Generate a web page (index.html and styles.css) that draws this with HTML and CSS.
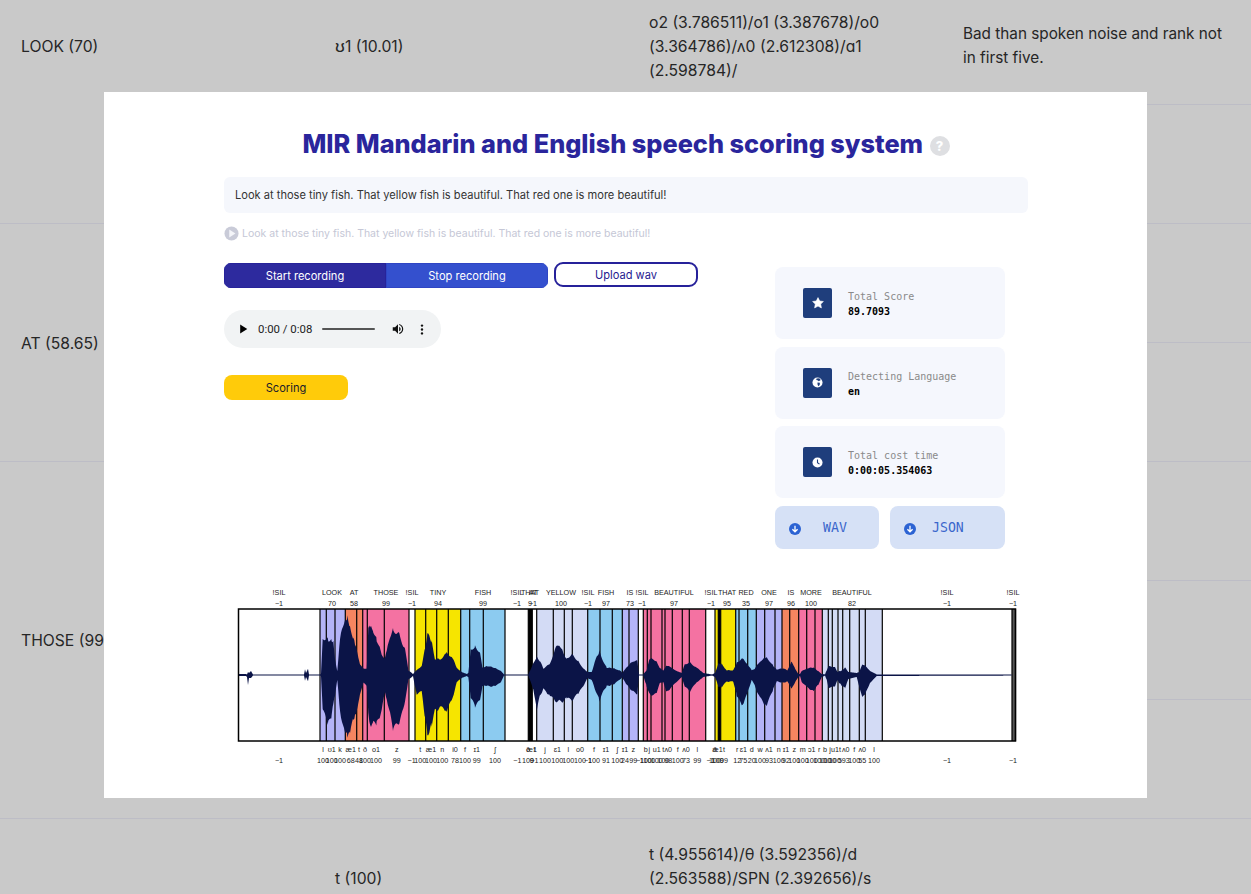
FILE: index.html
```html
<!DOCTYPE html>
<html lang="en">
<head>
    <meta charset="UTF-8">
    <meta name="viewport" content="width=device-width, initial-scale=1.0">
    <title>MIR speech scoring</title>
    <link rel="stylesheet" href="styles.css">
</head>
<body>
    <table class="result-table">
        <colgroup>
            <col class="col-wide"><col class="col-wide"><col class="col-wide"><col class="col-last">
        </colgroup>
        <tr>
            <td rowspan="2" class="word-top">LOOK (70)</td>
            <td>ʊ1 (10.01)</td>
            <td>o2 (3.786511)/o1 (3.387678)/o0 (3.364786)/ʌ0 (2.612308)/ɑ1 (2.598784)/</td>
            <td class="note-cell">Bad than spoken noise and rank not in first five.</td>
        </tr>
        <tr><td></td><td></td><td></td></tr>
        <tr>
            <td rowspan="2">AT (58.65)</td>
            <td></td><td></td><td></td>
        </tr>
        <tr><td></td><td></td><td></td></tr>
        <tr>
            <td rowspan="3">THOSE (99.85)</td>
            <td></td><td></td><td></td>
        </tr>
        <tr><td></td><td></td><td></td></tr>
        <tr><td></td><td></td><td></td></tr>
        <tr>
            <td></td>
            <td>t (100)</td>
            <td>t (4.955614)/θ (3.592356)/d (2.563588)/SPN (2.392656)/s (2.291144)/</td>
            <td></td>
        </tr>
    </table>

    <div class="modal">
        <h1 class="modal-title">
            MIR Mandarin and English speech scoring system
            <span class="help-icon">?</span>
        </h1>

        <div class="sentence-box">Look at those tiny fish. That yellow fish is beautiful. That red one is more beautiful!</div>

        <div class="hint-row">
            <svg class="hint-play" viewBox="0 0 16 16" width="16" height="16">
                <circle cx="8" cy="8" r="7.5" fill="#c9cbd8"/>
                <path d="M5.6 3.8 L12.2 8 L5.6 12.2 Z" fill="#f4f5f9"/>
            </svg>
            <span>Look at those tiny fish. That yellow fish is beautiful. That red one is more beautiful!</span>
        </div>

        <div class="main-grid">
            <div class="left-col">
                <div class="button-row">
                    <div class="record-group">
                        <button class="btn-start">Start recording</button>
                        <button class="btn-stop">Stop recording</button>
                    </div>
                    <button class="btn-upload">Upload wav</button>
                </div>

                <div class="player">
                    <svg viewBox="0 0 10 12" width="9" height="10"><path d="M1 0.5 L9.5 6 L1 11.5 Z" fill="#000"/></svg>
                    <span class="player-time">0:00 / 0:08</span>
                    <span class="player-track"></span>
                    <svg class="player-volume" viewBox="0 0 24 24" width="14" height="14"><path d="M3 9v6h4l5 5V4L7 9H3zm13.5 3c0-1.77-1.02-3.29-2.5-4.03v8.05c1.48-.73 2.5-2.25 2.5-4.02zM14 3.23v2.06c2.89.86 5 3.54 5 6.71s-2.11 5.85-5 6.71v2.06c4.01-.91 7-4.49 7-8.77s-2.99-7.86-7-8.77z" fill="#111"/></svg>
                    <svg class="player-more" viewBox="0 0 4 14" width="4" height="11">
                        <circle cx="2" cy="2" r="1.5" fill="#111"/>
                        <circle cx="2" cy="7" r="1.5" fill="#111"/>
                        <circle cx="2" cy="12" r="1.5" fill="#111"/>
                    </svg>
                </div>

                <button class="btn-scoring">Scoring</button>
            </div>

            <div class="right-col">
                <div class="stat-card">
                    <div class="stat-icon">
                        <svg viewBox="0 0 12 12" width="12" height="12"><path d="M6 .6 L7.7 4 L11.4 4.5 L8.7 7.1 L9.4 10.9 L6 9.1 L2.6 10.9 L3.3 7.1 L.6 4.5 L4.3 4 Z" fill="#fff" stroke="#fff" stroke-width=".6" stroke-linejoin="round"/></svg>
                    </div>
                    <div class="stat-text">
                        <div class="stat-label">Total Score</div>
                        <div class="stat-value">89.7093</div>
                    </div>
                </div>
                <div class="stat-card">
                    <div class="stat-icon">
                        <svg viewBox="0 0 12 12" width="11" height="11">
                            <circle cx="6" cy="6" r="5.5" fill="#fff"/>
                            <path d="M5 1.6 L8 1.4 L9.6 3.4 L7.4 4.6 L6 3.6 L4.6 3.4 Z M6 6 L8.6 6.2 L8.4 8.6 L6.8 10 L6 8 Z" fill="#1f3e7c"/>
                        </svg>
                    </div>
                    <div class="stat-text">
                        <div class="stat-label">Detecting Language</div>
                        <div class="stat-value">en</div>
                    </div>
                </div>
                <div class="stat-card">
                    <div class="stat-icon">
                        <svg viewBox="0 0 12 12" width="11" height="11">
                            <circle cx="6" cy="6" r="5.5" fill="#fff"/>
                            <path d="M6 2.8 V6.2 L8.2 7.8" fill="none" stroke="#1f3e7c" stroke-width="1.2"/>
                        </svg>
                    </div>
                    <div class="stat-text">
                        <div class="stat-label">Total cost time</div>
                        <div class="stat-value">0:00:05.354063</div>
                    </div>
                </div>
                <div class="download-row">
                    <button class="btn-download btn-wav">
                        <svg viewBox="0 0 12 12" width="12" height="12">
                            <circle cx="6" cy="6" r="6" fill="#2c63d3"/>
                            <path d="M6 2.8 V8.6 M3.4 6.2 L6 8.8 L8.6 6.2" fill="none" stroke="#fff" stroke-width="1.3"/>
                        </svg>
                        <span>WAV</span>
                    </button>
                    <button class="btn-download btn-json">
                        <svg viewBox="0 0 12 12" width="12" height="12">
                            <circle cx="6" cy="6" r="6" fill="#2c63d3"/>
                            <path d="M6 2.8 V8.6 M3.4 6.2 L6 8.8 L8.6 6.2" fill="none" stroke="#fff" stroke-width="1.3"/>
                        </svg>
                        <span>JSON</span>
                    </button>
                </div>
            </div>
        </div>

        <svg id="alignmentChart" class="alignment-chart" viewBox="224 580 804 195" width="804" height="195"></svg>
    </div>

    <script src="chart.js"></script>
</body>
</html>
```

FILE: styles.css
```css
html, body {
    height: 100%;
    overflow: hidden;
}
body {
    font-family: Inter, Arial, sans-serif;
    background-color: #c9c9c9;
    color: #262626;
    margin: 0;
}
.result-table {
    width: 1251px;
    margin-top: -14px;
    border-collapse: collapse;
    table-layout: fixed;
    font-size: 15.7px;
    line-height: 24px;
}
.col-wide {
    width: 314px;
}
.col-last {
    width: 309px;
}
.result-table td {
    height: 118.9px;
    box-sizing: border-box;
    padding: 3px 24px 0 21px;
    border-bottom: 1px solid #bdbdc6;
}
.result-table td.word-top {
    vertical-align: top;
    padding-top: 49px;
}
.result-table td.note-cell {
    padding-top: 2px;
    padding-right: 20px;
    font-size: 15.3px;
}
.modal {
    position: absolute;
    left: 104px;
    top: 92px;
    width: 1043px;
    height: 706px;
    box-sizing: border-box;
    padding: 36px 119px 0 120px;
    background-color: #fff;
}
.modal-title {
    margin: 0 0 17px;
    font-size: 25.3px;
    line-height: 32px;
    font-weight: 800;
    color: #2a259c;
    text-align: center;
}
.help-icon {
    display: inline-block;
    width: 20px;
    height: 20px;
    border-radius: 50%;
    background-color: #dedfe2;
    color: #fff;
    font-size: 13px;
    line-height: 20px;
    vertical-align: 2px;
    margin-left: 1px;
}
.sentence-box {
    height: 36px;
    padding-left: 11px;
    border-radius: 6px;
    background-color: #f5f7fc;
    color: #333;
    font-size: 11.1px;
    line-height: 36px;
}
.hint-row {
    display: flex;
    align-items: center;
    gap: 3px;
    height: 16px;
    margin-top: 12px;
    color: #c5c7d6;
    font-size: 10.5px;
}
.hint-play {
    width: 15px;
    height: 15px;
}
.main-grid {
    display: grid;
    grid-template-columns: 551px 230px;
    margin-top: 21px;
}
.button-row {
    display: flex;
    gap: 6px;
}
.record-group {
    display: flex;
    width: 324px;
    height: 25px;
    margin-top: 1px;
    border-radius: 7px;
    overflow: hidden;
}
button {
    font-family: Inter, Arial, sans-serif;
    font-size: 11.1px;
    padding: 0;
    border: none;
}
.btn-start, .btn-stop {
    width: 50%;
    color: #fff;
}
.btn-start {
    background-color: #2d2a9e;
    box-shadow: inset 0 0 0 1px #27239a;
}
.btn-stop {
    background-color: #3450ce;
    box-shadow: inset 0 0 0 1px #2f45c4;
}
.btn-upload {
    width: 144px;
    height: 25px;
    background-color: #fff;
    border: 2px solid #26219a;
    border-radius: 9px;
    color: #1f1a90;
}
.player {
    display: flex;
    align-items: center;
    width: 217px;
    height: 38px;
    box-sizing: border-box;
    margin-top: 22px;
    padding-left: 15px;
    border-radius: 19px;
    background-color: #f1f3f4;
}
.player-time {
    margin-left: 10px;
    font-family: Roboto, Arial, sans-serif;
    font-size: 11.4px;
    color: #222;
    white-space: nowrap;
}
.player-track {
    width: 53px;
    height: 2px;
    margin-left: 10px;
    border-radius: 1px;
    background-color: #555;
}
.player-volume {
    margin-left: 16px;
}
.player-more {
    margin-left: 15px;
}
.btn-scoring {
    display: block;
    width: 124px;
    height: 25px;
    margin-top: 27px;
    border-radius: 8px;
    background-color: #ffcb0a;
    color: #1a1a2a;
}
.right-col {
    display: flex;
    flex-direction: column;
    gap: 7.5px;
    padding-top: 5px;
}
.stat-card {
    display: flex;
    align-items: center;
    gap: 16px;
    height: 72px;
    padding-left: 28px;
    border-radius: 8px;
    background-color: #f5f7fd;
    font-family: "DejaVu Sans Mono", "Liberation Mono", monospace;
    font-size: 10px;
    line-height: 15px;
}
.stat-text {
    padding-top: 2px;
}
.stat-icon {
    display: flex;
    align-items: center;
    justify-content: center;
    width: 29px;
    height: 30px;
    border-radius: 2px;
    background-color: #1f3e7c;
}
.stat-label {
    color: #8a8a8a;
}
.stat-value {
    color: #000;
    font-weight: 700;
}
.download-row {
    display: flex;
    gap: 11px;
}
.btn-download {
    display: flex;
    align-items: center;
    height: 43px;
    padding-left: 14px;
    border-radius: 8px;
    background-color: #d6e1f6;
    color: #3a66cc;
    font-family: "DejaVu Sans Mono", "Liberation Mono", monospace;
    font-size: 13.2px;
}
.btn-download svg {
    margin-top: 3px;
}
.btn-wav {
    width: 104px;
}
.btn-wav span {
    margin-left: 22px;
}
.btn-json {
    width: 115px;
}
.btn-json span {
    margin-left: 16px;
}
.alignment-chart {
    display: block;
    margin-top: 31px;
}
.chart-label {
    font-family: "Liberation Sans", Arial, sans-serif;
    font-size: 7.2px;
    fill: #222;
    text-anchor: middle;
}
.seg-lav { fill: #b4b4f8; }
.seg-org { fill: #f58560; }
.seg-pnk { fill: #f472a2; }
.seg-yel { fill: #f6e500; }
.seg-blu { fill: #8ccbf0; }
.seg-per { fill: #d3dbf5; }
.seg-wht { fill: #fff; }
.seg-blk { fill: #000; }
.seg-gry { fill: #555; }
.seg-line {
    stroke: #000;
    stroke-width: 1.2;
}
.chart-frame {
    fill: none;
    stroke: #000;
    stroke-width: 1.5;
}
.chart-wave {
    fill: #0b1447;
}
```

FILE: chart.js
```js
// segments: right edge of each phone + colour class
const segments = [
    [320, 'wht'], [326.3, 'lav'], [335, 'lav'], [345.3, 'lav'],
    [356.7, 'org'], [362.7, 'org'], [367.3, 'pnk'], [384.3, 'pnk'], [409, 'pnk'],
    [415, 'wht'], [425.7, 'yel'], [436.7, 'yel'], [448.3, 'yel'], [460.7, 'yel'],
    [469.7, 'blu'], [483.3, 'blu'], [505, 'blu'],
    [528.3, 'wht'], [532.3, 'blk'], [536.7, 'wht'],
    [553.3, 'per'], [564.3, 'per'], [572.3, 'per'], [587.7, 'per'],
    [600, 'blu'], [612.3, 'blu'], [622.3, 'blu'],
    [629, 'lav'], [638.3, 'lav'], [643.3, 'wht'],
    [647.3, 'pnk'], [651, 'pnk'], [662, 'pnk'], [665, 'pnk'], [672.3, 'pnk'], [682.3, 'pnk'], [689.3, 'pnk'], [705.7, 'pnk'],
    [715, 'wht'], [718.3, 'yel'], [720.7, 'blk'], [735.7, 'yel'],
    [739, 'blu'], [747.7, 'blu'], [756.3, 'blu'],
    [764.7, 'lav'], [775, 'lav'], [782, 'lav'],
    [789.7, 'org'], [798.7, 'org'],
    [806.7, 'pnk'], [815, 'pnk'], [822.3, 'pnk'],
    [828.3, 'per'], [832.3, 'per'], [838, 'per'], [842.7, 'per'], [849.7, 'per'], [859.3, 'per'], [865.3, 'per'], [882.3, 'per'],
    [1012, 'wht'], [1015.5, 'gry']
];

// waveform envelope: x, height above centre, depth below centre
const wave = [
    [238,1,1],[246,1,1],[247,.6,2],[248,3,10],[249,2,3],[251,4,3],[253,.6,.6],[304,.6,.6],[305,6,6],[306,2,2],[308,7,7],[309,.6,.6],
    [320,.6,.6],[321,1,1],[322.7,40,38],[328.3,38,52],[331.7,38,45],[333.3,36,30],[335,17,22],[337.3,4,5],[340,38,38],[345,62,65],
    [347.3,60,63],[350,52,62],[353.3,40,48],[355,32,42],[358.3,20,32],[360,12,22],[363.3,7,8],[366.7,7,12],[368.3,50,40],[370,50,52],
    [373.3,48,52],[376.7,38,52],[381.7,22,38],[385,18,18],[386.7,25,25],[390,42,42],[393.3,48,58],[398.3,45,52],[403.3,32,38],[405,30,30],
    [408.3,5,5],[413,1,1],[416.7,5,20],[421.7,10,18],[425,28,45],[427.3,45,65],[431.7,35,52],[435,17,38],[440,17,35],[446.7,23,37],
    [451.7,20,28],[456.7,8,8],[461.7,3,3],[466.7,1,1],[468.3,2,2],[470.7,28,25],[475,30,33],[480,25,28],[482.3,8,12],[486.7,10,12],
    [493.3,8,12],[500,5,9],[504,.6,.6],[528.3,.6,.6],[533.3,12,15],[536.7,20,38],[540,15,22],[543.3,7,15],[550,12,22],[555,28,28],
    [559.3,33,28],[563.3,23,28],[566.7,18,25],[571.7,22,27],[578.3,15,20],[583.3,7,12],[587.3,3,3],[591.7,3,5],[596.7,20,20],[599.3,25,27],
    [603.3,15,18],[606.7,8,12],[613.3,7,10],[620,5,5],[622.3,2,2],[626,8,10],[633.3,15,18],[637.3,15,20],[639,.6,.6],[643.3,.6,.6],
    [646.7,5,12],[649.3,17,20],[653.3,17,22],[656.7,15,20],[660,7,8],[663.3,5,8],[666.7,10,18],[671.7,8,13],[676.7,4,7],[681.7,2,2],
    [685,12,13],[690,13,17],[696.7,8,8],[703.3,2,2],[712,.6,.6],[715,2,2],[718.3,12,12],[721.7,12,13],[726.7,5,7],[733.3,5,7],[736.7,13,22],
    [741.7,18,33],[746.7,13,22],[751.7,5,5],[755,7,12],[760,15,25],[766.7,19,33],[773.3,10,15],[776.7,6,7],[783.3,7,8],[787.3,5,7],
    [791.7,15,15],[795,7,8],[798.3,1,2],[800,1,1],[801.7,4,7],[806.7,7,13],[813.3,8,17],[818.3,4,10],[821.7,1,2],[825,.6,.6],[826.7,5,5],
    [828.3,9,13],[835,9,13],[837.3,3,5],[841.7,5,12],[845,8,14],[848.3,3,4],[856.7,2,2],[859.3,3,12],[862.3,12,25],[865.7,10,20],[870,4,8],
    [876.7,.6,1],[1012,.6,.6]
];

const words = [
    [279,'!SIL','−1'],[332,'LOOK','70'],[354,'AT','58'],[386,'THOSE','99'],[412,'!SIL','−1'],[438,'TINY','94'],[483,'FISH','99'],
    [517,'!SIL','−1'],[530,'THAT','9'],[533,'AT','−1'],[561,'YELLOW','100'],[588,'!SIL','−1'],[606,'FISH','97'],[630,'IS','73'],[642,'!SIL','−1'],
    [674,'BEAUTIFUL','97'],[711,'!SIL','−1'],[727,'THAT','95'],[746,'RED','35'],[769,'ONE','97'],[791,'IS','96'],[811,'MORE','100'],
    [852,'BEAUTIFUL','82'],[947,'!SIL','−1'],[1013,'!SIL','−1']
];

const phones = [
    [279,'','−1'],[323,'l','100'],[331.7,'ʊ1','100'],[340,'k','100'],[350.7,'æ1','68'],[359,'t','48'],[365,'ð','100'],[376,'o1','100'],[396.7,'z','99'],
    [411.7,'','−1'],[420.3,'t','100'],[431,'æ1','100'],[442.3,'n','100'],[455,'i0','78'],[465,'f','100'],[476.7,'ɪ1','99'],[495,'ʃ','100'],
    [517.3,'','−1'],[528,'ð','100'],[531.7,'æ1','9'],[534.5,'t','−1'],[545,'j','100'],[557.3,'ɛ1','100'],[568.3,'l','100'],[580,'o0','100'],[588,'','−1'],
    [594,'f','100'],[606,'ɪ1','91'],[617.3,'ʃ','100'],[625,'ɪ1','24'],[633.3,'z','99'],[640,'','−1'],[645.7,'b','100'],[649.3,'j','100'],[656.7,'u1','100'],
    [663.3,'t','100'],[668.3,'ʌ0','98'],[677.7,'f','100'],[686,'ʌ0','73'],[697.3,'l','99'],[710.7,'','−1'],[715,'ð','100'],[717.5,'æ1','100'],[724,'t','99'],
    [737.3,'r','12'],[743.3,'ɛ1','75'],[751.7,'d','20'],[760,'w','100'],[769,'ʌ1','93'],[778.7,'n','100'],[786,'ɪ1','92'],[794.3,'z','100'],[802.7,'m','100'],
    [811.7,'ɔ1','100'],[819.3,'r','100'],[825,'b','100'],[830,'j','100'],[835,'u1','100'],[840,'t','5'],[845.7,'ʌ0','93'],[854.3,'f','100'],[862.3,'ʌ0','55'],
    [874,'l','100'],[947,'','−1'],[1013,'','−1']
];

const svg = document.getElementById('alignmentChart');
const NS = 'http://www.w3.org/2000/svg';
const TOP = 609, BOTTOM = 741, LEFT = 238.5, MID = 675;

function add(tag, attrs, text) {
    const el = document.createElementNS(NS, tag);
    for (const key in attrs) el.setAttribute(key, attrs[key]);
    if (text) el.textContent = text;
    svg.appendChild(el);
}

// one point per pixel, roughened a little so the edge isn't a clean line
function envelope() {
    const points = [];
    for (let i = 0; i < wave.length - 1; i++) {
        const [x0, up0, down0] = wave[i];
        const [x1, up1, down1] = wave[i + 1];
        for (let x = x0; x < x1; x += 1) {
            const t = (x - x0) / (x1 - x0);
            const up = up0 + (up1 - up0) * t;
            const down = down0 + (down1 - down0) * t;
            const rough = up > 4 ? 1 - 0.12 * Math.abs(Math.sin(x * 12.9898)) : 1;
            points.push([x, up * rough, down * rough]);
        }
    }
    return points;
}

let prev = LEFT;
segments.forEach(([right, color]) => {
    add('rect', { x: prev, y: TOP, width: right - prev, height: BOTTOM - TOP, class: 'seg-' + color });
    prev = right;
});
segments.forEach(([right]) => {
    add('line', { x1: right, x2: right, y1: TOP, y2: BOTTOM, class: 'seg-line' });
});

const outline = envelope();
const upper = outline.map(p => p[0] + ',' + (MID - p[1]));
const lower = outline.slice().reverse().map(p => p[0] + ',' + (MID + p[2]));
add('polygon', { points: upper.concat(lower).join(' '), class: 'chart-wave' });

add('rect', { x: LEFT, y: TOP, width: 1015.5 - LEFT, height: BOTTOM - TOP, class: 'chart-frame' });

words.forEach(([x, name, score]) => {
    add('text', { x: x, y: 595, class: 'chart-label' }, name);
    add('text', { x: x, y: 606, class: 'chart-label' }, score);
});
phones.forEach(([x, name, score]) => {
    add('text', { x: x, y: 752, class: 'chart-label' }, name);
    add('text', { x: x, y: 763, class: 'chart-label' }, score);
});
```
